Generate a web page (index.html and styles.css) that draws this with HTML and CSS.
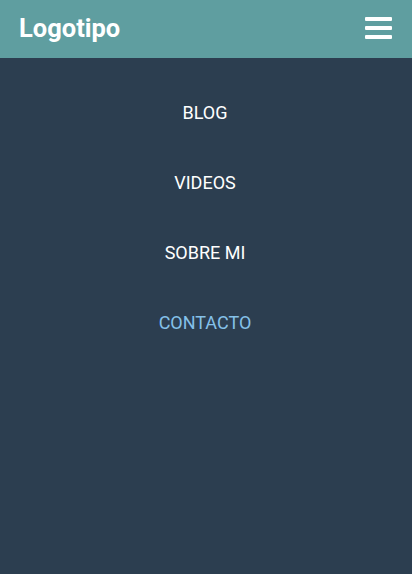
FILE: index.html
```html
<!DOCTYPE html>
<html lang="es">
<head>
<meta charset="utf-8">
<title>Logotipo</title>
<link rel="stylesheet" href="styles.css">
</head>
<body>
<header class="header">
  <div class="logo">Logotipo</div>
  <button class="menu-btn" aria-label="Menú">
    <svg width="27" height="24" viewBox="0 0 27 24"><rect x="0" y="0" width="27" height="4" rx="1" fill="#fff"/><rect x="0" y="9" width="27" height="4" rx="1" fill="#fff"/><rect x="0" y="18" width="27" height="4" rx="1" fill="#fff"/></svg>
  </button>
</header>
<nav class="nav">
  <ul class="nav-list">
    <li><a href="#" class="nav-link">BLOG</a></li>
    <li><a href="#" class="nav-link">VIDEOS</a></li>
    <li><a href="#" class="nav-link">SOBRE MI</a></li>
    <li><a href="#" class="nav-link active">CONTACTO</a></li>
  </ul>
</nav>
</body>
</html>
```
FILE: styles.css
```css
* { box-sizing: border-box; }
html, body { margin: 0; padding: 0; height: 100%; }
body {
  font-family: Roboto, "Liberation Sans", sans-serif;
  background: #2c3e50;
  display: flex;
  flex-direction: column;
}
.header {
  height: 58px;
  background: #5f9ea0;
  display: flex;
  align-items: center;
  justify-content: space-between;
  padding: 0 20px 0 19px;
  flex-shrink: 0;
}
.logo {
  color: #fff;
  font-weight: 700;
  font-size: 25.5px;
  line-height: 1;
  margin-top: -1px;
}
.menu-btn {
  background: none;
  border: 0;
  padding: 0;
  display: flex;
  cursor: pointer;
}
.nav { flex: 1; }
.nav-list {
  list-style: none;
  margin: 0;
  padding: 19px 2px 0 0;
}
.nav-list li {
  height: 70px;
  display: flex;
  align-items: center;
  justify-content: center;
}
.nav-link {
  color: #fff;
  text-decoration: none;
  font-size: 18px;
}
.nav-link.active { color: #85c1e9; }
```
